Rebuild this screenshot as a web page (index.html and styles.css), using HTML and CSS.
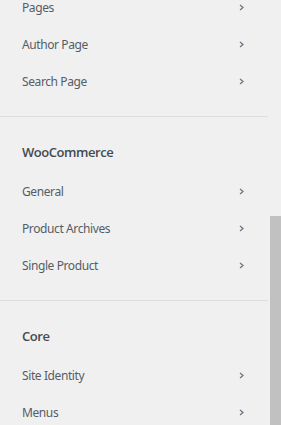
FILE: index.html
```html
<!DOCTYPE html>
<html>
<head>
<meta charset="utf-8">
<link rel="stylesheet" href="styles.css">
</head>
<body>
<div class="frame">
  <div class="panel">
    <section class="group group--first">
      <ul class="items">
        <li class="item"><span class="label">Pages</span><svg class="chev" viewBox="0 0 5 7"><path d="M1 1 L4 3.5 L1 6"/></svg></li>
        <li class="item"><span class="label">Author Page</span><svg class="chev" viewBox="0 0 5 7"><path d="M1 1 L4 3.5 L1 6"/></svg></li>
        <li class="item"><span class="label">Search Page</span><svg class="chev" viewBox="0 0 5 7"><path d="M1 1 L4 3.5 L1 6"/></svg></li>
      </ul>
    </section>
    <section class="group">
      <h3 class="heading">WooCommerce</h3>
      <ul class="items">
        <li class="item"><span class="label">General</span><svg class="chev" viewBox="0 0 5 7"><path d="M1 1 L4 3.5 L1 6"/></svg></li>
        <li class="item"><span class="label">Product Archives</span><svg class="chev" viewBox="0 0 5 7"><path d="M1 1 L4 3.5 L1 6"/></svg></li>
        <li class="item"><span class="label">Single Product</span><svg class="chev" viewBox="0 0 5 7"><path d="M1 1 L4 3.5 L1 6"/></svg></li>
      </ul>
    </section>
    <section class="group">
      <h3 class="heading">Core</h3>
      <ul class="items">
        <li class="item"><span class="label">Site Identity</span><svg class="chev" viewBox="0 0 5 7"><path d="M1 1 L4 3.5 L1 6"/></svg></li>
        <li class="item"><span class="label">Menus</span><svg class="chev" viewBox="0 0 5 7"><path d="M1 1 L4 3.5 L1 6"/></svg></li>
      </ul>
    </section>
  </div>
  <div class="scrollbar"><div class="thumb"></div></div>
</div>
</body>
</html>
```
FILE: styles.css
```css
html, body {
  margin: 0;
  padding: 0;
  height: 100%;
  overflow: hidden;
  background: #f0f0f0;
}
body {
  font-family: "Noto Sans", "Open Sans", sans-serif;
}
.frame {
  display: flex;
  height: 425px;
  overflow: hidden;
}
.panel {
  width: 268px;
  flex: none;
}
.scrollbar {
  margin-left: 2px;
  width: 11px;
  flex: none;
  padding-top: 216px;
  display: flex;
  flex-direction: column;
}
.thumb {
  flex: 1;
  background: #c1c1c1;
}
.group {
  border-top: 1px solid #dcdcdc;
  padding-bottom: 16px;
}
.group--first {
  border-top: none;
  margin-top: -11px;
  padding-bottom: 16px;
}
.heading {
  margin: 0;
  padding: 26px 22px 12px;
  font-family: "Open Sans", "Noto Sans", sans-serif;
  font-size: 13px;
  line-height: 18px;
  font-weight: 600;
  letter-spacing: -0.45px;
  color: #444a50;
}
.items {
  list-style: none;
  margin: 0;
  padding: 0;
}
.item {
  height: 37px;
  display: flex;
  align-items: center;
  justify-content: space-between;
  padding: 0 24px 0 22px;
  font-size: 12px;
  letter-spacing: -0.4px;
  color: #555d66;
}
.label {
  line-height: 12px;
}
.chev {
  width: 5px;
  height: 7px;
  fill: none;
  stroke: #6c7781;
  stroke-width: 1.3;
}
```
